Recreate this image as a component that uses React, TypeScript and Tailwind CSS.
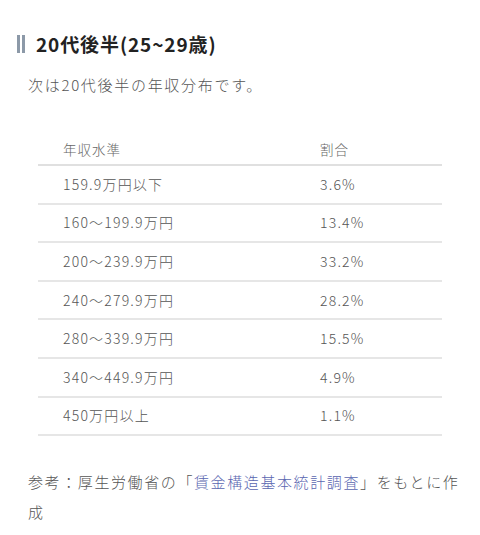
const rows = [
  ["159.9万円以下", "3.6%"],
  ["160～199.9万円", "13.4%"],
  ["200～239.9万円", "33.2%"],
  ["240～279.9万円", "28.2%"],
  ["280～339.9万円", "15.5%"],
  ["340～449.9万円", "4.9%"],
  ["450万円以上", "1.1%"],
];

export default function App() {
  return (
    <div className="min-h-[535px] w-[480px] bg-white font-['Noto_Sans_CJK_JP',sans-serif] font-light text-[#555]">
      {/* Heading */}
      <div className="flex items-center pl-[17px] pt-[30px]">
        <div className="flex gap-[2px] h-[18px]">
          <span className="w-[3px] bg-[#8c99a8]" />
          <span className="w-[3px] bg-[#8c99a8]" />
        </div>
        <h2 className="ml-[11px] text-[19px] font-bold leading-[28px] tracking-[0.9px] text-[#222]">
          20代後半(25~29歳)
        </h2>
      </div>

      <p className="mt-[14px] pl-[28px] text-[15px] leading-[26px] tracking-[1.7px]">
        次は20代後半の年収分布です。
      </p>

      {/* Table */}
      <div className="mx-[38px] mt-[37px] w-[404px]">
        <div className="grid grid-cols-[282px_1fr] h-[31px] items-center border-b-2 border-[#e0e0e0] text-[13.5px] tracking-[1px] text-[#666]">
          <div className="pl-[25px]">年収水準</div>
          <div>割合</div>
        </div>
        {rows.map(([label, pct]) => (
          <div
            key={label}
            className="grid grid-cols-[282px_1fr] h-[38.6px] items-center border-b-2 border-[#e6e6e6] text-[14px] tracking-[1.2px]"
          >
            <div className="pl-[25px]">{label}</div>
            <div>{pct}</div>
          </div>
        ))}
      </div>

      {/* Source */}
      <p className="mt-[31px] pl-[28px] pr-[18px] text-[15px] leading-[30px] tracking-[1.6px]">
        参考：厚生労働省の「<span className="text-[#5a66b0]">賃金構造基本統計調査</span>」をもとに作成
      </p>
    </div>
  );
}
